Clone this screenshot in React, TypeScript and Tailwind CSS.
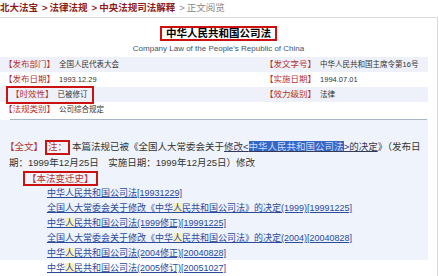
import React from "react";

const font = "font-['Liberation_Sans','Noto_Sans_CJK_SC',sans-serif]";

const info = [
  { l: ["发布部门", "全国人民代表大会"], r: ["发文字号", "中华人民共和国主席令第16号"], shade: true },
  { l: ["发布日期", "1993.12.29"], r: ["实施日期", "1994.07.01"], shade: false },
  { l: ["时效性", "已被修订"], r: ["效力级别", "法律"], shade: true, boxed: true },
  { l: ["法规类别", "公司综合规定"], r: null, shade: false },
];

const history = [
  { pre: "中华人民共和国公司法[19931229]", hi: "", post: "" },
  { pre: "全国人大常委会关于修改《中华", hi: "人", post: "民共和国公司法》的决定(1999)[19991225]" },
  { pre: "中华", hi: "人", post: "民共和国公司法(1999修正)[19991225]" },
  { pre: "全国人大常委会关于修改《中华", hi: "人", post: "民共和国公司法》的决定(2004)[20040828]" },
  { pre: "中华", hi: "人", post: "民共和国公司法(2004修正)[20040828]" },
  { pre: "中华", hi: "人", post: "民共和国公司法(2005修订)[20051027]" },
];

function Field({ label, value }: { label: string; value: string }) {
  return (
    <span className="flex items-center gap-[4px] whitespace-nowrap">
      <span className="text-[8.5px] text-[#b33333]">【{label}】</span>
      <span className="text-[7.5px] text-[#333]">{value}</span>
    </span>
  );
}

export default function App() {
  return (
    <div className={`w-[439px] h-[276px] bg-white overflow-hidden ${font}`}>
      {/* breadcrumb */}
      <div className="h-[17px] flex items-center text-[9.5px] font-bold text-[#8a1c1c] whitespace-nowrap">
        <span>北大法宝</span>
        <span className="ml-[4px] mr-[2px]">&gt;</span>
        <span>法律法规</span>
        <span className="ml-[4px] mr-[2px]">&gt;</span>
        <span>中央法规司法解释</span>
        <span className="ml-[4px] mr-[2px] font-normal text-[#888]">&gt;</span>
        <span className="font-normal text-[#888]">正文阅览</span>
      </div>

      <div className="w-[438px] h-[259px] border-t border-r border-[#dadada]">
        {/* title */}
        <div className="pt-[8px] flex justify-center">
          <span className="h-[15px] px-[4px] border-2 border-[#cc1111] flex items-center text-[10.5px] leading-none font-bold text-black">
            中华人民共和国公司法
          </span>
        </div>
        <div className="text-center text-[8px] leading-[10px] mt-[3px] text-[#44546a] font-['Liberation_Sans',sans-serif]">
          Company Law of the People's Republic of China
        </div>

        {/* info table */}
        <div className="mt-[3px] w-[428px]">
          {info.map((row, i) => (
            <div
              key={i}
              className={`h-[15px] grid grid-cols-[265px_1fr] items-center ${row.shade ? "bg-[#eef1f9]" : ""}`}
            >
              <div className="pl-[4px] flex items-center">
                {row.boxed ? (
                  <span className="h-[18px] -my-[2px] ml-[2px] pl-[3px] pr-[4px] border-2 border-[#cc1111] flex items-center">
                    <Field label={row.l[0]} value={row.l[1]} />
                  </span>
                ) : (
                  <Field label={row.l[0]} value={row.l[1]} />
                )}
              </div>
              <div>{row.r && <Field label={row.r[0]} value={row.r[1]} />}</div>
            </div>
          ))}
        </div>
        <div className="mt-[2px] ml-[10px] w-[417px] border-t border-[#a9b5c6]" />

        {/* body */}
        <div className="w-[428px] h-[140px] bg-[#eff3fb] pt-[19px] pl-[5px] text-[9.5px] leading-[16px] text-[#333] whitespace-nowrap">
          <div className="flex items-center">
            <span className="text-[#b33333]">【全文】</span>
            <span className="h-[15px] px-[1px] mx-[2px] border-2 border-[#cc1111] flex items-center text-[#b33333]">注：</span>
            <span>本篇法规已被《全国人大常委会关于</span>
            <span className="underline text-[#333a55]">
              修改&lt;<span className="bg-[#3566c4] text-[#c9dcff]">中华人民共和国公司法</span>&gt;的决定
            </span>
            <span>》（发布日</span>
          </div>
          <div className="pl-[4px]">期：1999年12月25日　实施日期：1999年12月25日）修改</div>
          <div className="ml-[18px] w-fit h-[15px] px-[2px] border-2 border-[#cc1111] flex items-center text-[#b33333]">
            【本法变迁史】
          </div>
          <ul className="pl-[42px] text-[9px] leading-[15px]">
            {history.map((h, i) => (
              <li key={i}>
                <span className="underline text-[#2a4a9e]">
                  {h.pre}
                  {h.hi && <span className="bg-[#fbf1b6]">{h.hi}</span>}
                  {h.post}
                </span>
              </li>
            ))}
          </ul>
        </div>
      </div>
    </div>
  );
}
